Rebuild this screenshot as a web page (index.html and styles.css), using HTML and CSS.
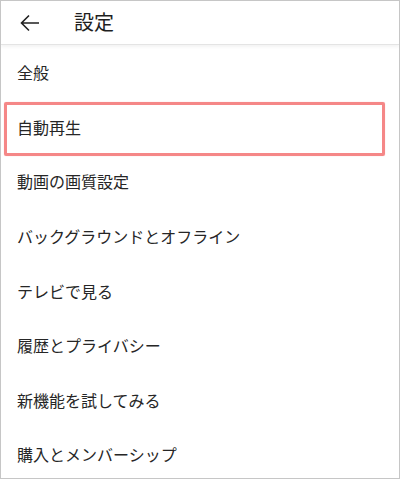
FILE: index.html
```html
<!DOCTYPE html>
<html lang="ja">
<head>
<meta charset="utf-8">
<title>設定</title>
<link rel="stylesheet" href="styles.css">
</head>
<body>
<div class="screen">
  <header class="topbar">
    <svg class="back" width="20" height="18" viewBox="0 0 20 18" aria-hidden="true">
      <path d="M1.5 9H19M9 1.5L1.5 9L9 16.5" fill="none" stroke="#212121" stroke-width="1.6" stroke-linecap="butt" stroke-linejoin="miter"/>
    </svg>
    <h1 class="title">設定</h1>
  </header>
  <ul class="menu">
    <li class="item">全般</li>
    <li class="item item-marked">自動再生<span class="mark"></span></li>
    <li class="item">動画の画質設定</li>
    <li class="item">バックグラウンドとオフライン</li>
    <li class="item">テレビで見る</li>
    <li class="item">履歴とプライバシー</li>
    <li class="item">新機能を試してみる</li>
    <li class="item">購入とメンバーシップ</li>
  </ul>
</div>
</body>
</html>
```

FILE: styles.css
```css
html, body {
  margin: 0;
  padding: 0;
  background: #ffffff;
}
body {
  font-family: "Noto Sans CJK JP", "Noto Sans", "Liberation Sans", sans-serif;
  color: #262626;
}
.screen {
  box-sizing: border-box;
  width: 400px;
  height: 479px;
  border: 1px solid #c6c6c6;
  overflow: hidden;
  background: #fff;
}
.topbar {
  position: relative;
  box-sizing: border-box;
  height: 44px;
  display: flex;
  align-items: center;
  padding-left: 19px;
  border-bottom: 1px solid #e4e4e4;
  box-shadow: 0 2px 3px rgba(0, 0, 0, 0.05);
}
.back {
  display: block;
  margin-top: 0px;
}
.title {
  margin: 0 0 0 34px;
  font-size: 20px;
  font-weight: 400;
  line-height: 1;
  color: #1e1e1e;
  position: relative;
  top: -1px;
}
.menu {
  list-style: none;
  margin: 0;
  padding: 0;
}
.item {
  position: relative;
  height: 54.6px;
  display: flex;
  align-items: center;
  padding-left: 16px;
  font-size: 16px;
  line-height: 1;
}
.mark {
  position: absolute;
  left: 3px;
  top: 2px;
  width: 381px;
  height: 54px;
  box-sizing: border-box;
  border: 3px solid #f58787;
  border-radius: 2px;
  box-shadow: 0 0 1px rgba(245, 135, 135, 0.6);
  pointer-events: none;
}
```
